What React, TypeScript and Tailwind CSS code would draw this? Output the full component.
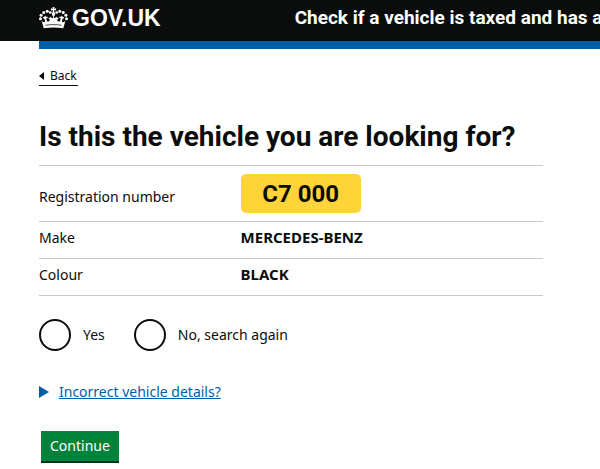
import React, { useState } from 'react';

const Crown: React.FC = () => (
  <svg viewBox="0 0 58 44" className="h-[22px] w-[29px]" fill="currentColor" aria-hidden="true">
    {/* centre cross */}
    <path d="M27 0h4l-.8 3.400 4-1v4.600l-4-1 .8 4.500h-4l.8-4.500-4 1V2.400l4 1z" />
    <circle cx="29" cy="13.500" r="3.600" />
    {/* pearls on both arches */}
    <circle cx="22.5" cy="11" r="2.7" />
    <circle cx="16.5" cy="8.5" r="3" />
    <circle cx="9.5" cy="11" r="3" />
    <circle cx="4.2" cy="16.5" r="3" />
    <circle cx="3" cy="23.5" r="3" />
    <circle cx="35.5" cy="11" r="2.7" />
    <circle cx="41.5" cy="8.5" r="3" />
    <circle cx="48.5" cy="11" r="3" />
    <circle cx="53.8" cy="16.5" r="3" />
    <circle cx="55" cy="23.5" r="3" />
    {/* arches, crosses and band */}
    <path d="M9.500 42.500 5 27c2 3 4.500 4 7 3l-1-7c-1.800 1-3 .2-3-3 1.800.8 3 0 4-2.500 1.800 2 3 2.800 5.500 2 .2 2.800-1.200 3.800-3.500 3.300l2.500 6.200c3 .5 5-1 5.500-4-1.500 0-3-1-3-3.500 2.500.8 4-.5 4.500-2.500l2 3c1.500 1 2.500.2 3-2l-2-4h5l-2 4c.5 2.200 1.500 3 3 2l2-3c.5 2 2 3.300 4.500 2.500 0 2.500-1.500 3.500-3 3.500.5 3 2.500 4.500 5.500 4l2.500-6.200c-2.300.5-3.700-.5-3.500-3.300 2.500.8 3.700 0 5.500-2 1 2.500 2.200 3.300 4 2.500 0 3.200-1.200 4-3 3l-1 7c2.500 1 5 0 7-3l-4.500 15.500c-12-2-27-2-39 0z" />
    <path d="M13 36.500c10.500-1.700 21.500-1.700 32 0" fill="none" stroke="#0b0c0c" strokeWidth="1.500" />
  </svg>
);

const rowHead = 'w-[40%] border-b border-[#c8cacb] text-left font-normal';
const rowCell = 'border-b border-[#c8cacb] text-[15px] font-bold';

const App: React.FC = () => {
  const [answer, setAnswer] = useState('');

  const options = [
    { value: 'yes', label: 'Yes' },
    { value: 'no', label: 'No, search again' },
  ];

  return (
    <div className="min-h-screen overflow-hidden bg-white font-['Noto_Sans',sans-serif] text-sm text-[#0b0c0c]">
      <header className="bg-[#0b0c0c] pl-[39px] text-white">
        <div className="flex h-[41px] items-start gap-[134px] pt-[6px]">
          <a href="#" className="flex shrink-0 items-center gap-1 font-['Liberation_Sans',sans-serif] text-[23px] leading-6 font-bold">
            <Crown />
            GOV.UK
          </a>
          <a href="#" className="shrink-0 font-['Roboto',sans-serif] text-[19px] leading-6 font-bold whitespace-nowrap">
            Check if a vehicle is taxed and has an MOT
          </a>
        </div>
      </header>

      <div className="pl-[39px]">
        <div className="h-2 bg-[#005ea5]" />

        <a href="#" className="mt-[18px] inline-flex items-center gap-[6px] border-b border-[#0b0c0c] pr-px text-xs leading-[18px]">
          <svg viewBox="0 0 5 8" className="h-2 w-[5px]" fill="currentColor" aria-hidden="true">
            <path d="M5 0v8L0 4z" />
          </svg>
          Back
        </a>

        <main className="mt-8 max-w-[504px]">
          <h1 id="question" className="pt-px font-['Roboto',sans-serif] text-[28px] leading-9 font-bold">
            Is this the vehicle you are looking for?
          </h1>

          <table className="mt-[10px] w-full table-fixed border-separate border-spacing-0 border-t border-[#c8cacb]">
            <tbody>
              <tr>
                <th scope="row" className={`${rowHead} h-14 pt-[6px]`}>Registration number</th>
                <td className={`${rowCell} h-14`}>
                  <div className="flex h-[39px] w-[120px] items-center justify-center rounded-[5px] bg-[#ffd439] font-['Roboto',sans-serif] text-2xl">
                    C7 000
                  </div>
                </td>
              </tr>
              <tr>
                <th scope="row" className={`${rowHead} h-[37px] pb-1`}>Make</th>
                <td className={`${rowCell} h-[37px] pb-1`}>MERCEDES-BENZ</td>
              </tr>
              <tr>
                <th scope="row" className={`${rowHead} h-[37px] pb-1`}>Colour</th>
                <td className={`${rowCell} h-[37px] pb-1`}>BLACK</td>
              </tr>
            </tbody>
          </table>

          <form onSubmit={(e) => e.preventDefault()}>
            <fieldset aria-labelledby="question" className="mt-[23px] flex gap-[29px]">
              {options.map((option) => (
                <label key={option.value} className="flex items-center gap-3">
                  <input
                    type="radio"
                    name="correct"
                    value={option.value}
                    checked={answer === option.value}
                    onChange={() => setAnswer(option.value)}
                    className="size-8 appearance-none rounded-full border-2 border-[#0b0c0c] checked:bg-[#0b0c0c] checked:bg-clip-content checked:p-[5px]"
                  />
                  {option.label}
                </label>
              ))}
            </fieldset>

            <details className="mt-[31px]">
              <summary className="flex cursor-pointer list-none items-center gap-[10px] text-[#005ea5]">
                <svg viewBox="0 0 10 12" className="h-3 w-[10px]" fill="currentColor" aria-hidden="true">
                  <path d="M0 0v12l10-6z" />
                </svg>
                <span className="underline">Incorrect vehicle details?</span>
              </summary>
              <p className="mt-2">Contact DVLA if the details shown are wrong.</p>
            </details>

            <button
              type="submit"
              className="mt-[29px] ml-[2px] h-8 border-b-2 border-[#003618] bg-[#00823b] px-[9px] text-white"
            >
              Continue
            </button>
          </form>
        </main>
      </div>
    </div>
  );
};

export default App;
